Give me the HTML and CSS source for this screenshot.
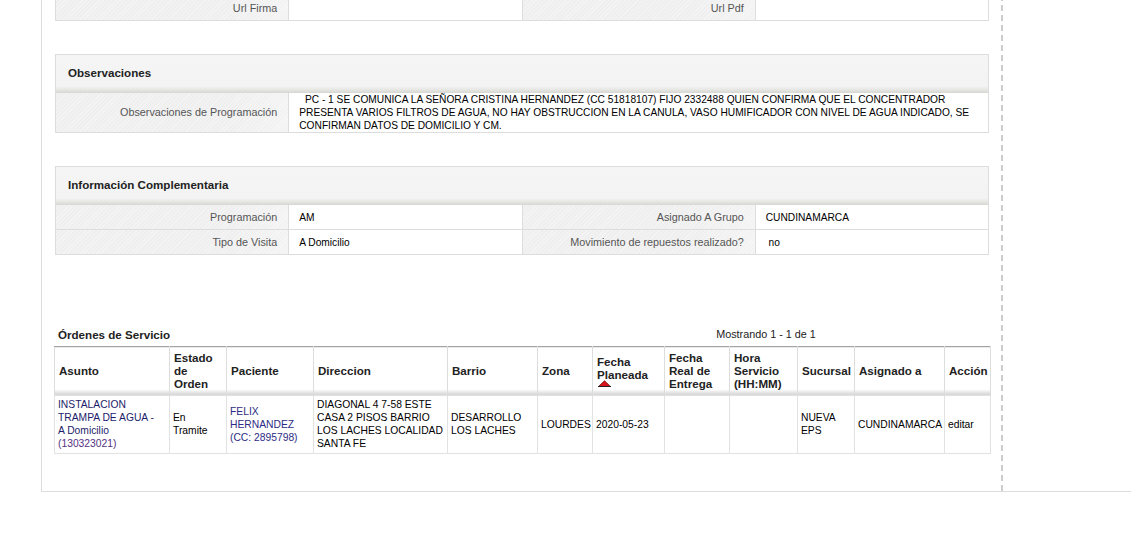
FILE: index.html
```html
<!DOCTYPE html>
<html lang="es">
<head>
<meta charset="utf-8">
<title>Orden</title>
<link rel="stylesheet" href="styles.css">
</head>
<body>
<div class="page">
  <div class="main">
    <section class="panel panel-first">
      <div class="kv kv-4">
        <div class="lbl">Url Firma</div><div class="val"></div>
        <div class="lbl">Url Pdf</div><div class="val"></div>
      </div>
    </section>

    <section class="panel">
      <div class="panel-head">Observaciones</div>
      <div class="kv kv-2">
        <div class="lbl">Observaciones de Programación</div>
        <div class="val val-text">&nbsp;&nbsp;PC - 1 SE COMUNICA LA SEÑORA CRISTINA HERNANDEZ (CC 51818107) FIJO 2332488 QUIEN CONFIRMA QUE EL CONCENTRADOR PRESENTA VARIOS FILTROS DE AGUA, NO HAY OBSTRUCCION EN LA CANULA, VASO HUMIFICADOR CON NIVEL DE AGUA INDICADO, SE CONFIRMAN DATOS DE DOMICILIO Y CM.</div>
      </div>
    </section>

    <section class="panel">
      <div class="panel-head">Información Complementaria</div>
      <div class="kv kv-4">
        <div class="lbl">Programación</div><div class="val">AM</div>
        <div class="lbl">Asignado A Grupo</div><div class="val">CUNDINAMARCA</div>
        <div class="lbl">Tipo de Visita</div><div class="val">A Domicilio</div>
        <div class="lbl">Movimiento de repuestos realizado?</div><div class="val">&nbsp;no</div>
      </div>
    </section>

    <section class="orders">
      <div class="orders-cap">
        <div class="orders-title">Órdenes de Servicio</div>
        <div class="orders-pager">Mostrando 1 - 1 de 1</div>
      </div>
      <table class="grid">
        <colgroup>
          <col class="c-asunto"><col class="c-estado"><col class="c-paciente"><col class="c-dir">
          <col class="c-barrio"><col class="c-zona"><col class="c-fplan"><col class="c-freal">
          <col class="c-hora"><col class="c-suc"><col class="c-asig"><col class="c-acc">
        </colgroup>
        <thead>
          <tr>
            <th>Asunto</th>
            <th>Estado de Orden</th>
            <th>Paciente</th>
            <th>Direccion</th>
            <th>Barrio</th>
            <th>Zona</th>
            <th>Fecha Planeada<span class="sort"><svg width="13" height="7" viewBox="0 0 13 7"><polygon points="0.5,6.5 6.5,0.8 12.5,6.5" fill="#d8141c" stroke="#7a0a0a" stroke-width="0.8"/><line x1="0" y1="6.5" x2="13" y2="6.5" stroke="#222" stroke-width="1"/></svg></span></th>
            <th>Fecha Real de Entrega</th>
            <th>Hora Servicio (HH:MM)</th>
            <th>Sucursal</th>
            <th>Asignado a</th>
            <th>Acción</th>
          </tr>
        </thead>
        <tbody>
          <tr>
            <td><span class="link">INSTALACION TRAMPA DE AGUA -<br>A Domicilio</span> <span class="link-id">(130323021)</span></td>
            <td>En<br>Tramite</td>
            <td><span class="link-pac">FELIX HERNANDEZ (CC: 2895798)</span></td>
            <td>DIAGONAL 4 7-58 ESTE CASA 2 PISOS BARRIO LOS LACHES LOCALIDAD SANTA FE</td>
            <td>DESARROLLO LOS LACHES</td>
            <td>LOURDES</td>
            <td>2020-05-23</td>
            <td></td>
            <td></td>
            <td>NUEVA EPS</td>
            <td>CUNDINAMARCA</td>
            <td>editar</td>
          </tr>
        </tbody>
      </table>
    </section>
  </div>
  <div class="aside"></div>
</div>
</body>
</html>
```

FILE: styles.css
```css
html, body {
  margin: 0;
  padding: 0;
  background: #fff;
}

body {
  font-family: "Liberation Sans", Arial, sans-serif;
  color: #000;
  overflow: hidden;
}

.page {
  display: flex;
  margin-left: 41px;
  margin-top: -5px;
  border-left: 1px solid #ddd;
  border-bottom: 1px solid #ddd;
}

.main {
  flex: none;
  width: 934px;
  padding: 0 12px 37px 13px;
  border-right: 2px dashed #ccc;
}

.aside {
  flex: 1;
}

/* ---------- panels ---------- */
.panel {
  border: 1px solid #ddd;
  margin-top: 33px;
  background: #fff;
}

.panel-first {
  margin-top: 0;
}

.panel-head {
  height: 35px;
  padding: 0 0 3px 12px;
  display: flex;
  align-items: center;
  font-size: 11.6px;
  font-weight: bold;
  color: #222;
  background: linear-gradient(to bottom, #f5f5f5 0, #f3f3f3 calc(100% - 7px), #e9e9e7 calc(100% - 4px), #d6d6d2 100%);
}

.kv {
  display: grid;
  gap: 1px;
  background: #ddd;
}

.kv-4 {
  grid-template-columns: repeat(4, 1fr);
}

.kv-2 {
  grid-template-columns: 232.25px 1fr;
}

.lbl {
  min-height: 24px;
  display: flex;
  align-items: center;
  justify-content: flex-end;
  padding-right: 11px;
  font-size: 10.8px;
  line-height: 13px;
  color: #555;
  background:
    repeating-linear-gradient(-45deg, rgba(255, 255, 255, 0.3) 0 1px, rgba(255, 255, 255, 0) 1px 3px),
    linear-gradient(to right, #efefef 0, #efefef 75%, #f3f3f3 100%);
}

.val {
  min-height: 24px;
  display: flex;
  align-items: center;
  padding: 0 4px 0 10px;
  font-size: 10.2px;
  line-height: 13px;
  color: #000;
  background: #fff;
}

.val-text {
  display: block;
}

/* ---------- orders ---------- */
.orders {
  margin-top: 71px;
}

.orders-cap {
  display: flex;
  align-items: center;
  height: 16px;
  padding-bottom: 4px;
}

.orders-title {
  flex: 1;
  padding-left: 3px;
  font-size: 11.6px;
  font-weight: bold;
  color: #222;
}

.orders-pager {
  width: 446px;
  text-align: center;
  font-size: 10.8px;
  color: #222;
}

.grid {
  width: calc(100% + 2px);
  margin: 0 -1px;
  border-collapse: collapse;
  table-layout: fixed;
}

.c-asunto { width: 115px; }
.c-estado { width: 57px; }
.c-paciente { width: 87px; }
.c-dir { width: 134px; }
.c-barrio { width: 90px; }
.c-zona { width: 55px; }
.c-fplan { width: 72px; }
.c-freal { width: 65px; }
.c-hora { width: 68px; }
.c-suc { width: 57px; }
.c-asig { width: 90px; }
.c-acc { width: 46px; }

.grid th {
  padding: 4px 2px 5px 4px;
  text-align: left;
  vertical-align: middle;
  font-size: 11.6px;
  line-height: 13px;
  font-weight: bold;
  color: #222;
  border-top: 1px solid #a3a3a3;
  border-left: 1px solid #ddd;
  border-right: 1px solid #ddd;
  background: linear-gradient(to bottom, #fff 0, #fff calc(100% - 6px), #ececec calc(100% - 4px), #d2d2d2 100%);
}

.sort {
  display: block;
  height: 7px;
  margin-top: -1px;
  padding-left: 1px;
  line-height: 0;
}

.grid td {
  padding: 2px 2px 3px 3px;
  vertical-align: middle;
  font-size: 10.3px;
  line-height: 13px;
  color: #000;
  border: 1px solid #e2e2e2;
}

.link {
  color: #1c1c6a;
}

.link-id {
  color: #553081;
}

.link-pac {
  color: #2c2c84;
}
```
